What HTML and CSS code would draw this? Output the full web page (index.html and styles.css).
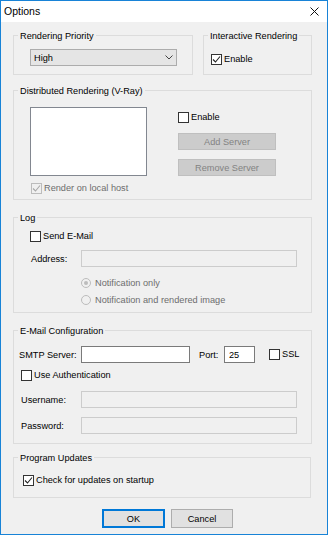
FILE: index.html
```html
<!DOCTYPE html>
<html>
<head>
<meta charset="utf-8">
<title>Options</title>
<link rel="stylesheet" href="styles.css">
</head>
<body>
<div class="window">
  <div class="titlebar">
    <span class="title">Options</span>
    <svg class="close" viewBox="0 0 9 9"><path d="M0.5 0.5L8.5 8.5M8.5 0.5L0.5 8.5"/></svg>
  </div>
  <div class="content">
    <div class="row1">
      <fieldset class="group g-priority">
        <legend>Rendering Priority</legend>
        <div class="body">
          <div class="combo"><span>High</span><svg class="chev" viewBox="0 0 8 5"><path d="M0.5 0.5L4 4L7.5 0.5"/></svg></div>
        </div>
      </fieldset>
      <fieldset class="group g-interactive">
        <legend>Interactive Rendering</legend>
        <div class="body">
          <label class="check"><span class="box"><svg viewBox="0 0 9 9"><path d="M1 4.5L3.5 7L8 1.5"/></svg></span><span>Enable</span></label>
        </div>
      </fieldset>
    </div>

    <fieldset class="group g-dr">
      <legend>Distributed Rendering (V-Ray)</legend>
      <div class="body">
        <div class="dr-top">
          <div class="listbox"></div>
          <div class="dr-side">
            <label class="check"><span class="box"></span><span>Enable</span></label>
            <button class="btn disabled" type="button">Add Server</button>
            <button class="btn disabled" type="button">Remove Server</button>
          </div>
        </div>
        <label class="check disabled local"><span class="box"><svg viewBox="0 0 9 9"><path d="M1 4.5L3.5 7L8 1.5"/></svg></span><span>Render on local host</span></label>
      </div>
    </fieldset>

    <fieldset class="group g-log">
      <legend>Log</legend>
      <div class="body">
        <label class="check"><span class="box"></span><span>Send E-Mail</span></label>
        <div class="field addr"><span class="lbl">Address:</span><input class="input wide" type="text" disabled></div>
        <div class="radios">
          <label class="radio-row"><span class="radio on"></span><span>Notification only</span></label>
          <label class="radio-row"><span class="radio"></span><span>Notification and rendered image</span></label>
        </div>
      </div>
    </fieldset>

    <fieldset class="group g-mail">
      <legend>E-Mail Configuration</legend>
      <div class="body">
        <div class="field smtp">
          <span class="lbl l-smtp">SMTP Server:</span><input class="input w-smtp" type="text">
          <span class="lbl l-port">Port:</span><input class="input w-port" type="text" value="25">
          <label class="check ssl"><span class="box"></span><span>SSL</span></label>
        </div>
        <label class="check auth"><span class="box"></span><span>Use Authentication</span></label>
        <div class="field user"><span class="lbl l-user">Username:</span><input class="input wide" type="text" disabled></div>
        <div class="field pass"><span class="lbl l-user">Password:</span><input class="input wide" type="password" disabled></div>
      </div>
    </fieldset>

    <fieldset class="group g-upd">
      <legend>Program Updates</legend>
      <div class="body">
        <label class="check"><span class="box"><svg viewBox="0 0 9 9"><path d="M1 4.5L3.5 7L8 1.5"/></svg></span><span>Check for updates on startup</span></label>
      </div>
    </fieldset>

    <div class="actions">
      <button class="btn dlg default" type="button">OK</button>
      <button class="btn dlg" type="button">Cancel</button>
    </div>
  </div>
</div>
</body>
</html>
```
FILE: styles.css
```css
* { box-sizing: border-box; }
html, body { margin: 0; padding: 0; }
body {
  width: 328px;
  height: 535px;
  background: #f0f0f0;
  font-family: "Liberation Sans", Arial, sans-serif;
  font-size: 9.2px;
  color: #000;
}
.window {
  width: 328px;
  height: 535px;
  border: 1px solid #1883d7;
  background: #f0f0f0;
  display: flex;
  flex-direction: column;
}
.titlebar {
  height: 21px;
  flex: none;
  background: #fff;
  display: flex;
  align-items: center;
  justify-content: space-between;
  padding: 0 8px 0 3px;
}
.title { font-size: 10.5px; line-height: 21px; }
.close { width: 9px; height: 9px; display: block; fill: none; stroke: #111; stroke-width: 1; }

.content {
  padding: 7px 15px 0 12px;
  display: flex;
  flex-direction: column;
}

.group {
  margin: 0;
  padding: 0;
  border: 1px solid #dcdcdc;
  min-width: 0;
}
.group > legend {
  margin-left: 4px;
  padding: 2px 2px 0;
  height: 13px;
  line-height: 11px;
}

/* row 1 */
.row1 { display: flex; gap: 10px; }
.g-priority { width: 180px; flex: none; }
.g-interactive { flex: 1; }
.g-priority .body { padding: 7px 0 8px 16px; }
.g-interactive .body { padding: 12px 0 0 7px; }

.combo {
  width: 147px;
  height: 17px;
  border: 1px solid #acacac;
  background: #e5e5e5;
  display: flex;
  align-items: center;
  justify-content: space-between;
  padding: 0 3px 0 3px;
}
.chev { width: 8px; height: 5px; display: block; fill: none; stroke: #444; stroke-width: 1; }

/* checkbox */
.check {
  display: flex;
  align-items: center;
  gap: 2px;
  height: 11px;
  line-height: 11px;
  white-space: nowrap;
}
.box {
  width: 11px;
  height: 11px;
  flex: none;
  border: 1px solid #333;
  background: #fff;
}
.box svg { display: block; width: 9px; height: 9px; fill: none; stroke: #222; stroke-width: 1.1; }
.check.disabled { color: #6d6d6d; }
.check.disabled .box { border-color: #bcbcbc; background: #f0f0f0; }
.check.disabled .box svg { stroke: #a8a8a8; }

/* buttons */
.btn {
  margin: 0;
  padding: 0;
  font: inherit;
  color: #000;
  background: #e1e1e1;
  border: 1px solid #adadad;
  display: flex;
  align-items: center;
  justify-content: center;
}
.btn.disabled { background: #cccccc; border-color: #bfbfbf; color: #838383; }

/* distributed */
.g-dr { margin-top: 9px; }
.g-dr .body { padding: 10px 0 5px 16px; }
.dr-top { display: flex; }
.listbox { width: 117px; height: 69px; border: 1px solid #828790; background: #fff; }
.dr-side {
  margin-left: 31px;
  padding-top: 5px;
  display: flex;
  flex-direction: column;
  align-items: flex-start;
}
.dr-side .btn { width: 98px; height: 17px; }
.dr-side .check + .btn { margin-top: 10px; }
.dr-side .btn + .btn { margin-top: 9px; }
.local { margin: 7px 0 0 1px; }

/* inputs */
.field { display: flex; align-items: center; white-space: nowrap; }
.input {
  height: 17px;
  margin: 0;
  padding: 0 0 0 4px;
  font: inherit;
  color: #000;
  border: 1px solid #7a7a7a;
  background: #fff;
  outline: none;
}
.input:disabled { border-color: #cccccc; background: #f0f0f0; }
.wide { width: 216px; }

/* log */
.g-log { margin-top: 11px; }
.g-log .body { padding: 7px 0 7px 16px; }
.addr { margin: 8px 0 0 1px; }
.addr .lbl { width: 50px; }
.radios {
  margin: 11px 0 0 51px;
  display: flex;
  flex-direction: column;
  gap: 7px;
}
.radio-row {
  display: flex;
  align-items: center;
  gap: 4px;
  height: 10px;
  line-height: 10px;
  color: #6d6d6d;
  white-space: nowrap;
}
.radio {
  width: 10px;
  height: 10px;
  flex: none;
  border: 1px solid #bcbcbc;
  border-radius: 50%;
  background: #f0f0f0;
  display: flex;
  align-items: center;
  justify-content: center;
}
.radio.on::after {
  content: "";
  width: 4px;
  height: 4px;
  border-radius: 50%;
  background: #bcbcbc;
}

/* mail */
.g-mail { margin-top: 11px; }
.g-mail .body { padding: 9px 0 9px 5px; }
.l-smtp { width: 62px; }
.w-smtp { width: 109px; }
.l-port { margin-left: 9px; width: 25px; }
.w-port { width: 31px; }
.ssl { margin-left: 14px; }
.auth { margin: 7px 0 0 2px; }
.user { margin: 10px 0 0 2px; }
.pass { margin: 9px 0 0 2px; }
.l-user { width: 60px; }

/* updates */
.g-upd { margin: 7px 1px 0 0; }
.g-upd .body { padding: 11px 0 11px 9px; }

/* dialog buttons */
.actions {
  margin-top: 11px;
  display: flex;
  justify-content: center;
  gap: 6px;
  padding-left: 10px;
}
.dlg { width: 62px; height: 19px; }
.dlg.default { width: 63px; border-color: #0078d7; box-shadow: inset 0 0 0 1px #0078d7; }
```
